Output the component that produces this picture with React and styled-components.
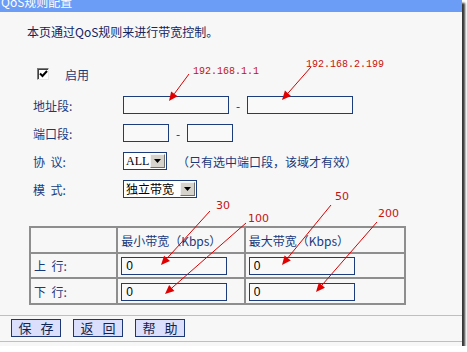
import React from "react";
import styled, { createGlobalStyle } from "styled-components";

const GlobalStyle = createGlobalStyle`
  html, body {
    margin: 0;
    padding: 0;
    background: #ffffff;
  }
  body {
    font-family: "Noto Sans CJK SC", "DejaVu Sans", sans-serif;
  }
`;

const Frame = styled.div`
  position: relative;
  width: 462px;
  height: 346px;
  background: #f7f7f7;
  box-shadow: 3px 3px 2px rgba(20, 20, 20, 0.85);
  overflow: hidden;
`;

const TitleBar = styled.div`
  height: 12px;
  background: #6b9cf6;
  overflow: hidden;
  padding-left: 1px;
`;

const TitleText = styled.div`
  margin-top: -6px;
  color: #ffffff;
  font-size: 12px;
  line-height: 16px;
`;

const Content = styled.div`
  display: flex;
  flex-direction: column;
`;

const Intro = styled.div`
  padding: 12px 0 0 27px;
  height: 16px;
  line-height: 16px;
  font-size: 12px;
  color: #13245e;
`;

const Row = styled.div`
  display: flex;
  align-items: center;
  height: 28px;
  margin-top: ${(p) => p.$top || 0}px;
  padding-left: ${(p) => p.$left || 33}px;
  font-size: 12px;
  color: #173a7c;
`;

const Label = styled.div`
  width: 90px;
  white-space: pre;
`;

const Controls = styled.div`
  display: flex;
  align-items: center;
`;

const TextBox = styled.input`
  box-sizing: border-box;
  width: ${(p) => p.$w}px;
  height: 18px;
  margin: 0;
  padding: 0 4px;
  border: 1px solid #1c3c7c;
  background: #f9f9f9;
  font-family: "Liberation Sans", Arial, sans-serif;
  font-size: 12px;
  color: #000;
  outline: none;
`;

const Dash = styled.span`
  width: ${(p) => p.$w}px;
  text-align: center;
  color: #333;
  font-size: 12px;
`;

const CheckBox = styled.div`
  box-sizing: border-box;
  width: 12px;
  height: 12px;
  border: 1px solid;
  border-color: #7a7a7a #e8e8e8 #e8e8e8 #7a7a7a;
  background: #ffffff;
  box-shadow: inset 1px 1px 0 #404040;
  display: flex;
  align-items: center;
  justify-content: center;
  margin-right: 16px;
`;

const SelectBox = styled.div`
  box-sizing: border-box;
  display: flex;
  align-items: center;
  width: ${(p) => p.$w}px;
  height: 18px;
  border: 1px solid #1c3c7c;
  background: #ffffff;
`;

const SelectValue = styled.div`
  flex: 1;
  padding-left: 2px;
  font-size: 12px;
  line-height: 16px;
  color: #000;
  font-family: ${(p) =>
    p.$serif
      ? '"Liberation Serif", "Noto Sans CJK SC", serif'
      : '"Noto Sans CJK SC", sans-serif'};
`;

const SelectArrow = styled.div`
  box-sizing: border-box;
  width: 15px;
  height: 14px;
  margin-right: 1px;
  background: #d6d3cc;
  border: 1px solid;
  border-color: #f4f4f4 #6f6f6f #6f6f6f #f4f4f4;
  display: flex;
  align-items: center;
  justify-content: center;
`;

const Hint = styled.span`
  margin-left: 10px;
  color: #173a7c;
  font-size: 12px;
`;

const Table = styled.table`
  margin: 23px 0 0 29px;
  width: 377px;
  border-collapse: collapse;
  border: 2px solid #7d7d7d;
`;

const Cell = styled.td`
  box-sizing: border-box;
  height: ${(p) => p.$h || 26}px;
  width: ${(p) => p.$w}px;
  padding: 0 3px;
  border: 2px solid #8e8e8e;
  font-size: 12px;
  color: #173a7c;
  white-space: pre;
`;

const ButtonBar = styled.div`
  margin-top: 10px;
  border-top: 1px solid #e8b875;
  border-bottom: 1px solid #e8b875;
  padding: 3px 0 4px 11px;
  display: flex;
  gap: 12px;
`;

const Button = styled.button`
  box-sizing: border-box;
  width: 50px;
  height: 18px;
  margin: 0;
  padding: 0 0 0 3px;
  border: 1px solid #1d3775;
  background: #dcdffb;
  font-family: "Noto Sans CJK SC", sans-serif;
  font-size: 13px;
  line-height: 16px;
  letter-spacing: 3px;
  color: #10244f;
  white-space: pre;
`;

const Overlay = styled.svg`
  position: absolute;
  left: 0;
  top: 0;
  pointer-events: none;
`;

const Arrow = ({ x1, y1, x2, y2 }) => {
  const dx = x2 - x1;
  const dy = y2 - y1;
  const len = Math.hypot(dx, dy);
  const ux = dx / len;
  const uy = dy / len;
  const bx = x2 - ux * 9;
  const by = y2 - uy * 9;
  const px = -uy * 4;
  const py = ux * 4;
  return (
    <g>
      <line x1={x1} y1={y1} x2={bx} y2={by} stroke="#d80000" strokeWidth="1" />
      <polygon
        points={`${x2},${y2} ${bx + px},${by + py} ${bx - px},${by - py}`}
        fill="#e00000"
      />
    </g>
  );
};

const notes = [
  { text: "192.168.1.1", x: 193, y: 74, mono: true },
  { text: "192.168.2.199", x: 306, y: 67, mono: true },
  { text: "30", x: 216, y: 209 },
  { text: "100", x: 248, y: 222 },
  { text: "50", x: 335, y: 200 },
  { text: "200", x: 378, y: 217 },
];

const arrows = [
  { x1: 189, y1: 74, x2: 169, y2: 101 },
  { x1: 311, y1: 67, x2: 282, y2: 100 },
  { x1: 210, y1: 211, x2: 161, y2: 265 },
  { x1: 246, y1: 223, x2: 165, y2: 294 },
  { x1: 331, y1: 205, x2: 282, y2: 265 },
  { x1: 377, y1: 222, x2: 316, y2: 292 },
];

function Triangle() {
  return (
    <svg width="7" height="4" viewBox="0 0 7 4">
      <polygon points="0,0 7,0 3.5,4" fill="#000" />
    </svg>
  );
}

export default function App() {
  return (
    <>
      <GlobalStyle />
      <Frame>
        <TitleBar>
          <TitleText>QoS规则配置</TitleText>
        </TitleBar>
        <Content>
          <Intro>本页通过QoS规则来进行带宽控制。</Intro>

          <Row $top={20} $left={37}>
            <CheckBox>
              <svg width="9" height="8" viewBox="0 0 9 8">
                <path d="M1 3.5 L3.5 6 L8 1" stroke="#000" strokeWidth="2" fill="none" />
              </svg>
            </CheckBox>
            <span>启用</span>
          </Row>

          <Row $top={3}>
            <Label>地址段:</Label>
            <Controls>
              <TextBox $w={106} />
              <Dash $w={18}>-</Dash>
              <TextBox $w={106} />
            </Controls>
          </Row>

          <Row>
            <Label>端口段:</Label>
            <Controls>
              <TextBox $w={46} />
              <Dash $w={18}>-</Dash>
              <TextBox $w={46} />
            </Controls>
          </Row>

          <Row>
            <Label>协  议:</Label>
            <Controls>
              <SelectBox $w={44}>
                <SelectValue $serif>ALL</SelectValue>
                <SelectArrow>
                  <Triangle />
                </SelectArrow>
              </SelectBox>
              <Hint>（只有选中端口段，该域才有效）</Hint>
            </Controls>
          </Row>

          <Row>
            <Label>模  式:</Label>
            <Controls>
              <SelectBox $w={74}>
                <SelectValue>独立带宽</SelectValue>
                <SelectArrow>
                  <Triangle />
                </SelectArrow>
              </SelectBox>
            </Controls>
          </Row>

          <Table>
            <tbody>
              <tr>
                <Cell $w={88}></Cell>
                <Cell $w={128}>最小带宽（Kbps）</Cell>
                <Cell $w={161}>最大带宽（Kbps）</Cell>
              </tr>
              <tr>
                <Cell $h={25}>上  行:</Cell>
                <Cell $h={25}>
                  <TextBox $w={106} defaultValue="0" />
                </Cell>
                <Cell $h={25}>
                  <TextBox $w={106} defaultValue="0" />
                </Cell>
              </tr>
              <tr>
                <Cell>下  行:</Cell>
                <Cell>
                  <TextBox $w={106} defaultValue="0" />
                </Cell>
                <Cell>
                  <TextBox $w={106} defaultValue="0" />
                </Cell>
              </tr>
            </tbody>
          </Table>

          <ButtonBar>
            <Button>保 存</Button>
            <Button>返 回</Button>
            <Button>帮 助</Button>
          </ButtonBar>
        </Content>

        <Overlay width="462" height="346" viewBox="0 0 462 346">
          {arrows.map((a, i) => (
            <Arrow key={i} {...a} />
          ))}
          {notes.map((n, i) => (
            <text
              key={i}
              x={n.x}
              y={n.y}
              fill="#c41414"
              fontSize={n.mono ? 10 : 11}
              fontFamily={n.mono ? '"Liberation Mono", monospace' : '"DejaVu Sans", sans-serif'}
            >
              {n.text}
            </text>
          ))}
        </Overlay>
      </Frame>
    </>
  );
}
